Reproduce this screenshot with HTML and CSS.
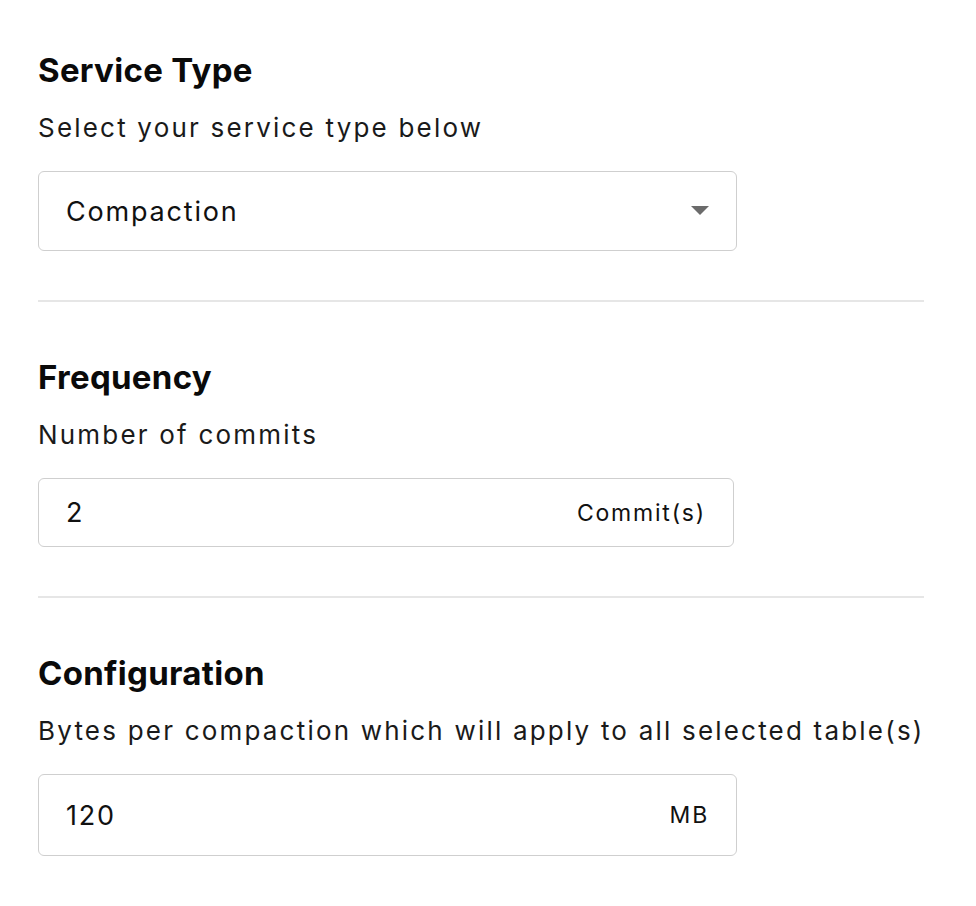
FILE: index.html
```html
<!DOCTYPE html>
<html>
<head>
<meta charset="utf-8">
<link rel="stylesheet" href="styles.css">
</head>
<body>
<main class="form">
  <section class="group">
    <h2 class="title">Service Type</h2>
    <p class="desc">Select your service type below</p>
    <div class="field field-select">
      <span class="value">Compaction</span>
      <svg class="caret" width="18" height="10" viewBox="0 0 18 10"><path d="M0 0 H18 L9 9 Z" fill="#6b6b6b"/></svg>
    </div>
  </section>
  <hr class="divider">
  <section class="group">
    <h2 class="title">Frequency</h2>
    <p class="desc">Number of commits</p>
    <div class="field field-commits">
      <span class="value">2</span>
      <span class="unit">Commit(s)</span>
    </div>
  </section>
  <hr class="divider">
  <section class="group">
    <h2 class="title">Configuration</h2>
    <p class="desc">Bytes per compaction which will apply to all selected table(s)</p>
    <div class="field field-bytes">
      <span class="value">120</span>
      <span class="unit">MB</span>
    </div>
  </section>
</main>
</body>
</html>
```
FILE: styles.css
```css
* { box-sizing: border-box; }
html, body { margin: 0; padding: 0; background: #fff; }
body {
  font-family: Inter, "Liberation Sans", sans-serif;
  color: #111;
}
.form {
  padding: 52px 52px 0 38px;
  width: 976px;
}
.group { display: flex; flex-direction: column; }
.title {
  margin: 0;
  font-size: 33px;
  font-weight: 700;
  line-height: 36px;
  letter-spacing: 0.3px;
  color: #0a0a0a;
}
.desc {
  margin: 25px 0 0;
  font-size: 26px;
  line-height: 30px;
  letter-spacing: 2.2px;
  font-weight: 400;
  color: #1a1a1a;
  white-space: nowrap;
}
.field {
  margin-top: 28px;
  border: 1.5px solid #cfcfcf;
  border-radius: 6px;
  display: flex;
  align-items: center;
  justify-content: space-between;
  padding: 0 27px 0 27px;
}
.field-select { width: 699px; height: 80px; }
.field-commits { width: 696px; height: 69px; }
.field-bytes { width: 699px; height: 82px; }
.value { font-size: 27px; letter-spacing: 1.8px; }
.unit { font-size: 23px; letter-spacing: 1.8px; }
.divider {
  margin: 49px 0 57px;
  border: 0;
  height: 2px;
  background: #e6e6e6;
  width: 886px;
}
```
